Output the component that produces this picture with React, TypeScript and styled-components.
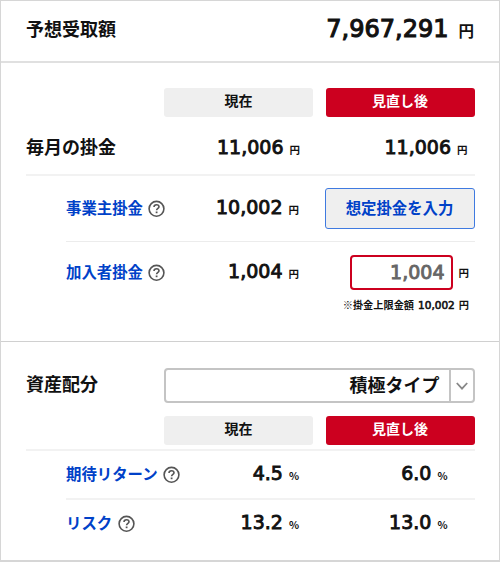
import React from "react";
import styled, { createGlobalStyle } from "styled-components";

const GlobalStyle = createGlobalStyle`
  *, *::before, *::after { box-sizing: border-box; }
  body { margin: 0; background: #fff; }
`;

const JP = `"Noto Sans CJK JP", sans-serif`;
const NUM = `"DejaVu Sans", "Noto Sans CJK JP", sans-serif`;

const Panel = styled.main`
  width: 500px;
  height: 562px;
  border: 1px solid #d6d6d6;
  border-bottom-width: 2px;
  font-family: ${JP};
  font-weight: 700;
  color: #111;
  background: #fff;
`;

const Section = styled.section<{ $height: number; $line?: string }>`
  height: ${(p) => p.$height}px;
  padding: 0 25px;
  ${(p) => p.$line && `border-bottom: ${p.$line};`}
`;

const Row = styled.div<{ $height: number; $top?: number; $indent?: boolean; $line?: string }>`
  display: grid;
  grid-template-columns: ${(p) => (p.$indent ? 98 : 138)}px 149px 11.5px 150px;
  align-items: start;
  height: ${(p) => p.$height}px;
  padding-top: ${(p) => p.$top ?? 0}px;
  margin-left: ${(p) => (p.$indent ? 40 : 0)}px;
  margin-right: -0.5px;
  ${(p) => p.$line && `border-bottom: ${p.$line};`}
`;

const Heading = styled.h2<{ $top: number }>`
  margin: ${(p) => p.$top}px 0 0;
  font-size: 18px;
  line-height: 26px;
  font-weight: 700;
  white-space: nowrap;
`;

const TotalRow = styled.div`
  display: flex;
  justify-content: space-between;
`;

const Tag = styled.div<{ $active?: boolean }>`
  grid-column: ${(p) => (p.$active ? 4 : 2)};
  width: 149px;
  height: 29px;
  justify-self: ${(p) => (p.$active ? "end" : "start")};
  border-radius: 3px;
  background: ${(p) => (p.$active ? "#cc001f" : "#efefef")};
  color: ${(p) => (p.$active ? "#fff" : "#111")};
  font-size: 14px;
  line-height: 25px;
  text-align: center;
`;

const Term = styled.div<{ $top: number }>`
  display: flex;
  align-items: flex-start;
  gap: 5.5px;
  margin-top: ${(p) => p.$top}px;
  color: #0041c8;
  font-size: 15.4px;
  line-height: 22px;
  white-space: nowrap;

  svg { flex: none; margin-top: 4px; }
`;

const Amount = styled.div<{ $top: number; $column?: number; $end?: number; $large?: boolean }>`
  ${(p) => p.$column && `grid-column: ${p.$column};`}
  display: flex;
  justify-content: flex-end;
  align-items: baseline;
  gap: ${(p) => (p.$large ? 10 : 6)}px;
  height: 30px;
  margin-top: ${(p) => p.$top}px;
  padding-right: ${(p) => p.$end ?? 14}px;
  font-family: ${NUM};
  font-size: ${(p) => (p.$large ? 24 : 19)}px;
  font-weight: 400;
  line-height: 30px;
  white-space: nowrap;
  -webkit-text-stroke: ${(p) => (p.$large ? 1.1 : 0.9)}px currentColor;
`;

const Unit = styled.span<{ $size?: number }>`
  font-family: ${JP};
  font-size: ${(p) => p.$size ?? 10.5}px;
  font-weight: 700;
  -webkit-text-stroke: 0;
`;

const EntryButton = styled.button`
  grid-column: 4;
  width: 150px;
  height: 41px;
  margin: 12px 0 0;
  padding: 0 0 4px;
  border: 1px solid #3f7ae0;
  border-radius: 3px;
  background: #efefef;
  color: #0041c8;
  font: 700 15.4px ${JP};
`;

const EntryCell = styled.div`
  grid-column: 4;
  padding: 13px 5.5px 0 0;
`;

const EntryLine = styled.div`
  display: flex;
  justify-content: flex-end;
  align-items: center;
  gap: 6px;
`;

const AmountInput = styled.input`
  width: 103px;
  height: 35px;
  padding: 0 6px 2px 0;
  border: 2px solid #cc001f;
  border-radius: 4px;
  outline: none;
  text-align: right;
  color: #666;
  font: 400 19px ${NUM};
  -webkit-text-stroke: 0.9px currentColor;
`;

const Note = styled.p`
  display: flex;
  justify-content: flex-end;
  gap: 4px;
  margin: 7px 0 0;
  font-size: 10.2px;
  line-height: 16px;
  white-space: nowrap;
`;

const NoteNumber = styled.span`
  font-family: ${NUM};
  font-size: 10.5px;
  font-weight: 400;
  -webkit-text-stroke: 0.6px currentColor;
`;

const Select = styled.div`
  grid-column: 2 / 5;
  display: flex;
  justify-content: flex-end;
  height: 35px;
  border: 2px solid #c4c4c4;
  border-radius: 4px;
`;

const SelectText = styled.span`
  padding-right: 9px;
  font-size: 18px;
  line-height: 28px;
`;

const SelectArrow = styled.span`
  display: flex;
  align-items: center;
  justify-content: center;
  width: 24px;
  border-left: 2px solid #c4c4c4;
`;

const HelpIcon = () => (
  <svg width="17" height="17" viewBox="0 0 17 17" fill="none" stroke="#555">
    <circle cx="8.5" cy="8.8" r="7.4" strokeWidth="1.6" />
    <path d="M6 7C6 5.5 7.1 4.7 8.5 4.7S11 5.6 11 6.8C11 8.4 8.6 8.4 8.6 10.3" strokeWidth="1.6" />
    <path d="M8.6 11.5V13.2" strokeWidth="1.8" />
  </svg>
);

const ChevronIcon = () => (
  <svg width="12" height="8" viewBox="0 0 12 8" fill="none" stroke="#888" strokeWidth="1.8">
    <path d="M0.8 1L6 6.7L11.2 1" />
  </svg>
);

const Help = ({ label, top }: { label: string; top: number }) => (
  <Term $top={top}>
    {label}
    <HelpIcon />
  </Term>
);

const Tags = () => (
  <>
    <Tag>現在</Tag>
    <Tag $active>見直し後</Tag>
  </>
);

type ValueProps = { value: string; unit: string; top: number; column: number; end?: number };

const Value = ({ value, unit, top, column, end }: ValueProps) => (
  <Amount $top={top} $column={column} $end={end}>
    {value}
    <Unit>{unit}</Unit>
  </Amount>
);

const THICK = "2px solid #f2f2f2";
const THIN = "1px solid #ececec";

export default function App() {
  return (
    <>
      <GlobalStyle />
      <Panel>
        <Section $height={62} $line="2px solid #e0e0e0">
          <TotalRow>
            <Heading $top={14}>予想受取額</Heading>
            <Amount $top={13} $end={0} $large>
              7,967,291<Unit $size={15.5}>円</Unit>
            </Amount>
          </TotalRow>
        </Section>

        <Section $height={279} $line="1px solid #d0d0d0">
          <Row $height={54} $top={25}>
            <Tags />
          </Row>
          <Row $height={59} $line={THICK}>
            <Heading $top={16}>毎月の掛金</Heading>
            <Value value="11,006" unit="円" top={15} column={2} end={13} />
            <Value value="11,006" unit="円" top={15} column={4} end={7} />
          </Row>
          <Row $height={66} $indent $line={THIN}>
            <Help label="事業主掛金" top={20} />
            <Value value="10,002" unit="円" top={16} column={2} />
            <EntryButton>想定掛金を入力</EntryButton>
          </Row>
          <Row $height={99} $indent>
            <Help label="加入者掛金" top={18} />
            <Value value="1,004" unit="円" top={14} column={2} />
            <EntryCell>
              <EntryLine>
                <AmountInput defaultValue="1,004" />
                <Unit>円</Unit>
              </EntryLine>
              <Note>
                ※掛金上限金額<NoteNumber>10,002</NoteNumber>
                <span>円</span>
              </Note>
            </EntryCell>
          </Row>
        </Section>

        <Section $height={218}>
          <Row $height={61} $top={26}>
            <Heading $top={2}>資産配分</Heading>
            <Select>
              <SelectText>積極タイプ</SelectText>
              <SelectArrow>
                <ChevronIcon />
              </SelectArrow>
            </Select>
          </Row>
          <Row $height={48} $top={13} $line={THICK}>
            <Tags />
          </Row>
          <Row $height={49} $indent $line={THICK}>
            <Help label="期待リターン" top={11} />
            <Value value="4.5" unit="%" top={7} column={2} />
            <Value value="6.0" unit="%" top={7} column={4} end={27} />
          </Row>
          <Row $height={60} $indent>
            <Help label="リスク" top={11} />
            <Value value="13.2" unit="%" top={7} column={2} />
            <Value value="13.0" unit="%" top={7} column={4} end={27} />
          </Row>
        </Section>
      </Panel>
    </>
  );
}
